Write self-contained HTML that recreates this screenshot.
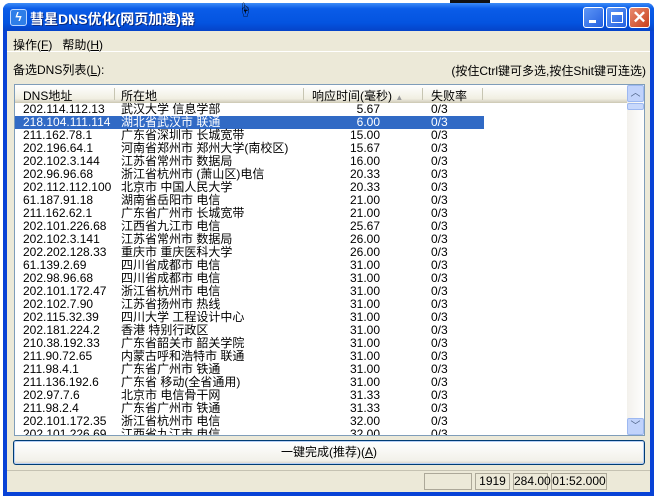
<!DOCTYPE html><html><head><meta charset="utf-8"><style>
*{margin:0;padding:0;box-sizing:border-box}
body{width:657px;height:499px;background:#fff;position:relative;overflow:hidden;font-family:"Liberation Sans","Noto Sans CJK SC","WenQuanYi Zen Hei",sans-serif;font-size:12px;color:#000}
.a{position:absolute}
.win{left:3px;top:3px;width:651px;height:493px;background:#0842d6;border-radius:7px 7px 0 0}
.title{left:3px;top:3px;width:651px;height:28px;border-radius:7px 7px 0 0;background:linear-gradient(#3d8cf7,#0a5ce8 20%,#0454e0 70%,#0543c8)}
.client{left:7px;top:31px;width:643px;height:461px;background:#ece9d8}
.btn{width:21px;height:21px;top:7px;border:1px solid #fff;border-radius:3px;background:linear-gradient(135deg,#5e96f6,#2460e0)}
.row{position:absolute;left:0;height:13px;width:610px;line-height:13px;white-space:nowrap}
.row span{position:absolute}
.c1{left:8px}.c2{left:106px}.c3{width:260px;text-align:right;left:105px}.c4{left:416px}
</style></head><body>
<div class="a" style="left:450px;top:0;width:40px;height:4px;background:#111"></div>
<div class="a win"></div>
<div class="a title"></div>
<div class="a" style="left:10px;top:9px;width:17px;height:17px;background:#2e7ee8;border:1px solid #bcd6ff;border-radius:3px;color:#fff;font-size:12px;text-align:center;line-height:15px;font-weight:bold">ϟ</div>
<div class="a" style="left:30px;top:9px;color:#fff;font-weight:bold;font-size:14px;text-shadow:1px 1px #0a2a80">彗星DNS优化(网页加速)器</div>
<div class="a btn" style="left:583px"><div class="a" style="left:5px;top:12px;width:7px;height:3px;background:#fff"></div></div>
<div class="a btn" style="left:606px"><div class="a" style="left:4px;top:4px;width:12px;height:11px;border:1px solid #fff;border-top-width:3px"></div></div>
<div class="a btn" style="left:629px;background:linear-gradient(135deg,#e98b6f,#c8401d);color:#fff;font-size:17px;text-align:center;line-height:19px;font-weight:bold">✕</div>
<div class="a client"></div>
<div class="a" style="left:7px;top:51px;width:643px;height:1px;background:#fff"></div>
<div class="a" style="left:13px;top:36px">操作(<u>F</u>)&nbsp;&nbsp;&nbsp;帮助(<u>H</u>)</div>
<div class="a" style="left:13px;top:61px">备选DNS列表(<u>L</u>):</div>
<div class="a" style="right:11px;top:62px">(按住Ctrl键可多选,按住Shit键可连选)</div>
<div class="a" style="left:14px;top:84px;width:631px;height:352px;border:1px solid #7f9db9;background:#fff;overflow:hidden">
 <div class="a" style="left:0;top:0;width:613px;height:18px;background:linear-gradient(#fff,#f1efe2 80%,#d6d2c2);border-bottom:1px solid #d0ccb8"></div>
 <div class="a" style="left:8px;top:2px">DNS地址</div>
 <div class="a" style="left:99px;top:3px;width:1px;height:12px;background:#c7c5b2"></div>
 <div class="a" style="left:106px;top:2px">所在地</div>
 <div class="a" style="left:288px;top:3px;width:1px;height:12px;background:#c7c5b2"></div>
 <div class="a" style="left:297px;top:2px">响应时间(毫秒) <span style="font-size:8px;color:#999">▲</span></div>
 <div class="a" style="left:407px;top:3px;width:1px;height:12px;background:#c7c5b2"></div>
 <div class="a" style="left:416px;top:2px">失败率</div>
 <div class="a" style="left:467px;top:3px;width:1px;height:12px;background:#c7c5b2"></div>
 <div class="a" style="left:0;top:18px;width:613px;height:340px">
 <div class="row" style="top:0"><span class="c1">202.114.112.13</span><span class="c2">武汉大学 信息学部</span><span class="c3">5.67</span><span class="c4">0/3</span></div>
 <div class="row" style="top:13px;width:469px;background:#316ac5;color:#fff"><span class="c1">218.104.111.114</span><span class="c2">湖北省武汉市 联通</span><span class="c3">6.00</span><span class="c4">0/3</span></div>
 <div class="row" style="top:26px"><span class="c1">211.162.78.1</span><span class="c2">广东省深圳市 长城宽带</span><span class="c3">15.00</span><span class="c4">0/3</span></div>
 <div class="row" style="top:39px"><span class="c1">202.196.64.1</span><span class="c2">河南省郑州市 郑州大学(南校区)</span><span class="c3">15.67</span><span class="c4">0/3</span></div>
 <div class="row" style="top:52px"><span class="c1">202.102.3.144</span><span class="c2">江苏省常州市 数据局</span><span class="c3">16.00</span><span class="c4">0/3</span></div>
 <div class="row" style="top:65px"><span class="c1">202.96.96.68</span><span class="c2">浙江省杭州市 (萧山区)电信</span><span class="c3">20.33</span><span class="c4">0/3</span></div>
 <div class="row" style="top:78px"><span class="c1">202.112.112.100</span><span class="c2">北京市 中国人民大学</span><span class="c3">20.33</span><span class="c4">0/3</span></div>
 <div class="row" style="top:91px"><span class="c1">61.187.91.18</span><span class="c2">湖南省岳阳市 电信</span><span class="c3">21.00</span><span class="c4">0/3</span></div>
 <div class="row" style="top:104px"><span class="c1">211.162.62.1</span><span class="c2">广东省广州市 长城宽带</span><span class="c3">21.00</span><span class="c4">0/3</span></div>
 <div class="row" style="top:117px"><span class="c1">202.101.226.68</span><span class="c2">江西省九江市 电信</span><span class="c3">25.67</span><span class="c4">0/3</span></div>
 <div class="row" style="top:130px"><span class="c1">202.102.3.141</span><span class="c2">江苏省常州市 数据局</span><span class="c3">26.00</span><span class="c4">0/3</span></div>
 <div class="row" style="top:143px"><span class="c1">202.202.128.33</span><span class="c2">重庆市 重庆医科大学</span><span class="c3">26.00</span><span class="c4">0/3</span></div>
 <div class="row" style="top:156px"><span class="c1">61.139.2.69</span><span class="c2">四川省成都市 电信</span><span class="c3">31.00</span><span class="c4">0/3</span></div>
 <div class="row" style="top:169px"><span class="c1">202.98.96.68</span><span class="c2">四川省成都市 电信</span><span class="c3">31.00</span><span class="c4">0/3</span></div>
 <div class="row" style="top:182px"><span class="c1">202.101.172.47</span><span class="c2">浙江省杭州市 电信</span><span class="c3">31.00</span><span class="c4">0/3</span></div>
 <div class="row" style="top:195px"><span class="c1">202.102.7.90</span><span class="c2">江苏省扬州市 热线</span><span class="c3">31.00</span><span class="c4">0/3</span></div>
 <div class="row" style="top:208px"><span class="c1">202.115.32.39</span><span class="c2">四川大学 工程设计中心</span><span class="c3">31.00</span><span class="c4">0/3</span></div>
 <div class="row" style="top:221px"><span class="c1">202.181.224.2</span><span class="c2">香港 特别行政区</span><span class="c3">31.00</span><span class="c4">0/3</span></div>
 <div class="row" style="top:234px"><span class="c1">210.38.192.33</span><span class="c2">广东省韶关市 韶关学院</span><span class="c3">31.00</span><span class="c4">0/3</span></div>
 <div class="row" style="top:247px"><span class="c1">211.90.72.65</span><span class="c2">内蒙古呼和浩特市 联通</span><span class="c3">31.00</span><span class="c4">0/3</span></div>
 <div class="row" style="top:260px"><span class="c1">211.98.4.1</span><span class="c2">广东省广州市 铁通</span><span class="c3">31.00</span><span class="c4">0/3</span></div>
 <div class="row" style="top:273px"><span class="c1">211.136.192.6</span><span class="c2">广东省 移动(全省通用)</span><span class="c3">31.00</span><span class="c4">0/3</span></div>
 <div class="row" style="top:286px"><span class="c1">202.97.7.6</span><span class="c2">北京市 电信骨干网</span><span class="c3">31.33</span><span class="c4">0/3</span></div>
 <div class="row" style="top:299px"><span class="c1">211.98.2.4</span><span class="c2">广东省广州市 铁通</span><span class="c3">31.33</span><span class="c4">0/3</span></div>
 <div class="row" style="top:312px"><span class="c1">202.101.172.35</span><span class="c2">浙江省杭州市 电信</span><span class="c3">32.00</span><span class="c4">0/3</span></div>
 <div class="row" style="top:325px"><span class="c1">202.101.226.69</span><span class="c2">江西省九江市 电信</span><span class="c3">32.00</span><span class="c4">0/3</span></div>
 </div>
 <div class="a" style="left:612px;top:0;width:17px;height:350px;background:linear-gradient(90deg,#f3f1ec,#fefefe)"></div>
 <div class="a" style="left:612px;top:0;width:17px;height:17px;background:#c1d3fb;border:1px solid #9db8f0;border-radius:2px;color:#4d6185;font-size:10px;text-align:center;line-height:15px">︿</div>
 <div class="a" style="left:612px;top:18px;width:17px;height:7px;background:#c8d8fb;border:1px solid #9db8f0;border-radius:2px"></div>
 <div class="a" style="left:612px;top:333px;width:17px;height:17px;background:#c1d3fb;border:1px solid #9db8f0;border-radius:2px;color:#4d6185;font-size:10px;text-align:center;line-height:15px">﹀</div>
</div>
<div class="a" style="left:13px;top:440px;width:632px;height:25px;border:1px solid #003c74;border-radius:3px;background:linear-gradient(#fff,#f2f1ea 85%,#d6d0c5);text-align:center;line-height:22px;box-shadow:inset 0 0 0 1px #b6cff5">一键完成(推荐)(<u>A</u>)</div>
<div class="a" style="left:7px;top:470px;width:643px;height:1px;background:#c5c2b2"></div>
<div class="a" style="left:424px;top:473px;width:48px;height:17px;border:1px solid #aca899"></div>
<div class="a" style="left:475px;top:473px;width:35px;height:17px;border:1px solid #aca899;text-align:center;line-height:15px">1919</div>
<div class="a" style="left:513px;top:473px;width:35px;height:17px;border:1px solid #aca899;text-align:center;line-height:15px">284.00</div>
<div class="a" style="left:551px;top:473px;width:56px;height:17px;border:1px solid #aca899;text-align:center;line-height:15px">01:52.000</div>
<div class="a" style="left:238px;top:0;font-size:14px">☝</div>
</body></html>
